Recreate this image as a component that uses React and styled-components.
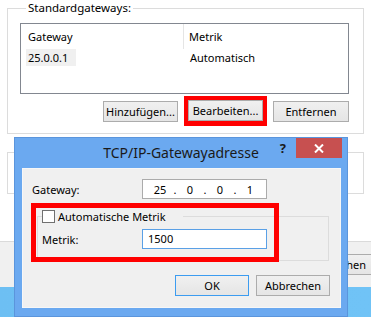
import React from 'react';
import styled, { createGlobalStyle, css } from 'styled-components';

const GlobalStyle = createGlobalStyle`
  html, body {
    margin: 0;
    padding: 0;
    background: #ffffff;
  }
  body {
    font-family: "Noto Sans", "DejaVu Sans", sans-serif;
    font-size: 11px;
    color: #000;
  }
`;

const Screen = styled.div`
  position: relative;
  width: 371px;
  height: 317px;
  overflow: hidden;
  display: flex;
  flex-direction: column;
`;

const Window = styled.div`
  height: 241px;
  padding: 0 7px;
  background: #fff;
  border-bottom: 1px solid #dadada;
`;

const GroupBox = styled.fieldset`
  margin: 0;
  padding: 0 14px 8px 12px;
  border: 1px solid #dcdcdc;
  height: ${({ $height }) => $height}px;
  box-sizing: border-box;
  ${({ $top }) => $top && css`margin-top: ${$top}px;`}
`;

const Legend = styled.legend`
  margin-left: 6px;
  padding: 0 2px;
  line-height: 16px;
  height: 16px;
  font-size: 11.5px;
`;

const ListBox = styled.div`
  margin-top: 7px;
  height: 71px;
  box-sizing: border-box;
  border: 1px solid #828790;
  display: grid;
  grid-template-columns: 163px 1fr;
  grid-template-rows: 25px 17px;
  align-content: start;
`;

const HeaderCell = styled.div`
  padding-left: ${({ $first }) => ($first ? 7 : 5)}px;
  display: flex;
  align-items: center;
  ${({ $first }) => $first && css`border-right: 1px solid #e5e5e5;`}
`;

const Cell = styled.div`
  display: flex;
  align-items: center;
  padding-left: ${({ $first }) => ($first ? 5 : 6)}px;
`;

const Selected = styled.span`
  background: #f0f0f0;
  height: 17px;
  line-height: 17px;
  padding: 0 8px 0 2px;
`;

const ButtonRow = styled.div`
  margin-top: 2px;
  display: flex;
  justify-content: flex-end;
  align-items: center;
  gap: 6px;
`;

const Highlight = styled.div`
  border: 4px solid #ff0000;
  border-bottom-width: 5px;
  display: flex;
`;

const Button = styled.button`
  font: inherit;
  color: #000;
  width: ${({ $width }) => $width || 75}px;
  height: 21px;
  padding: 0;
  flex-shrink: 0;
  box-sizing: border-box;
  border: 1px solid ${({ $default }) => ($default ? '#3c9cf0' : '#acacac')};
  background: linear-gradient(#f0f0f0, #e5e5e5);
  display: flex;
  align-items: center;
  justify-content: center;
`;

const BottomBar = styled.div`
  height: 45px;
  background: #f0f0f0;
  box-sizing: border-box;
  padding-top: 12px;
  display: flex;
  justify-content: flex-end;
  & > button {
    margin-right: -4px;
  }
`;

const Desktop = styled.div`
  flex: 1;
  background: linear-gradient(90deg, #6dbff3, #70c3f6);
`;

const Dialog = styled.div`
  position: absolute;
  left: 14px;
  top: 137px;
  width: 334px;
  height: 180px;
  box-sizing: border-box;
  background: #6ba9f0;
  border: 1px solid #5b95dc;
  display: flex;
  flex-direction: column;
`;

const TitleBar = styled.div`
  height: 30px;
  display: grid;
  grid-template-columns: 1fr auto 1fr;
  align-items: start;
`;

const Title = styled.div`
  grid-column: 2;
  font-size: 14px;
  line-height: 29px;
  color: #1a1a1a;
`;

const Controls = styled.div`
  grid-column: 3;
  justify-self: end;
  display: flex;
  align-items: center;
  gap: 10px;
  margin-right: 5px;
`;

const Help = styled.span`
  font-weight: bold;
  font-size: 13px;
  color: #1a1a1a;
  line-height: 20px;
`;

const Close = styled.div`
  width: 46px;
  height: 20px;
  background: #c75050;
  display: flex;
  align-items: center;
  justify-content: center;
`;

const Client = styled.div`
  position: relative;
  flex: 1;
  margin: 0 6px 8px 7px;
  background: #f0f0f0;
  border: 1px solid #f7f7f7;
  padding: 10px 10px 0 9px;
  box-sizing: border-box;
`;

const FieldRow = styled.div`
  display: flex;
  align-items: center;
  height: 20px;
`;

const Label = styled.div`
  width: ${({ $width }) => $width}px;
`;

const IpBox = styled.div`
  width: 125px;
  height: 20px;
  box-sizing: border-box;
  border: 1px solid #ababab;
  background: #fff;
  display: grid;
  grid-template-columns: 22px 8px 22px 8px 22px 8px 22px;
  padding-left: 6px;
  align-items: center;
  text-align: center;
`;

const Input = styled.div`
  width: 125px;
  height: 20px;
  box-sizing: border-box;
  border: 1px solid #5aa0e6;
  background: #fff;
  padding-left: 5px;
  line-height: 18px;
`;

const InnerGroup = styled.fieldset`
  margin: 9px 0 0 5px;
  padding: 5px 0 11px 4px;
  border: 1px solid #dcdcdc;
  width: 292px;
  box-sizing: border-box;
`;

const CheckLegend = styled.legend`
  width: 141px;
  padding: 0;
  margin-left: 0;
  height: 16px;
  display: flex;
  align-items: center;
  gap: 3px;
`;

const Checkbox = styled.span`
  width: 13px;
  height: 13px;
  box-sizing: border-box;
  border: 1px solid #707070;
  background: #fff;
`;

const DialogButtons = styled.div`
  margin-top: 14px;
  width: 298px;
  display: flex;
  justify-content: flex-end;
  gap: 7px;
`;

const Annotation = styled.div`
  position: absolute;
  left: 8px;
  top: 34px;
  width: 248px;
  height: 59px;
  box-sizing: border-box;
  border: 5px solid #ff0000;
`;

export default function App() {
  return (
    <>
      <GlobalStyle />
      <Screen>
        <Window>
          <GroupBox $height={134}>
            <Legend>Standardgateways:</Legend>
            <ListBox>
              <HeaderCell $first>Gateway</HeaderCell>
              <HeaderCell>Metrik</HeaderCell>
              <Cell $first><Selected>25.0.0.1</Selected></Cell>
              <Cell>Automatisch</Cell>
            </ListBox>
            <ButtonRow>
              <Button>Hinzufügen...</Button>
              <Highlight>
                <Button>Bearbeiten...</Button>
              </Highlight>
              <Button $width={76}>Entfernen</Button>
            </ButtonRow>
          </GroupBox>
          <GroupBox $height={42} $top={18} />
        </Window>
        <BottomBar>
          <Button $width={74}>Abbrechen</Button>
        </BottomBar>
        <Desktop />
        <Dialog>
          <TitleBar>
            <Title>TCP/IP-Gatewayadresse</Title>
            <Controls>
              <Help>?</Help>
              <Close>
                <svg width="10" height="9" viewBox="0 0 10 9">
                  <path d="M1 0.5 L9 8.5 M9 0.5 L1 8.5" stroke="#fff" strokeWidth="2" />
                </svg>
              </Close>
            </Controls>
          </TitleBar>
          <Client>
            <FieldRow>
              <Label $width={110}>Gateway:</Label>
              <IpBox>
                <span>25</span><span>.</span>
                <span>0</span><span>.</span>
                <span>0</span><span>.</span>
                <span>1</span>
              </IpBox>
            </FieldRow>
            <InnerGroup>
              <CheckLegend>
                <Checkbox />
                <span>Automatische Metrik</span>
              </CheckLegend>
              <FieldRow>
                <Label $width={100}>Metrik:</Label>
                <Input>1500</Input>
              </FieldRow>
            </InnerGroup>
            <DialogButtons>
              <Button $width={74} $default>OK</Button>
              <Button $width={74}>Abbrechen</Button>
            </DialogButtons>
            <Annotation />
          </Client>
        </Dialog>
      </Screen>
    </>
  );
}
